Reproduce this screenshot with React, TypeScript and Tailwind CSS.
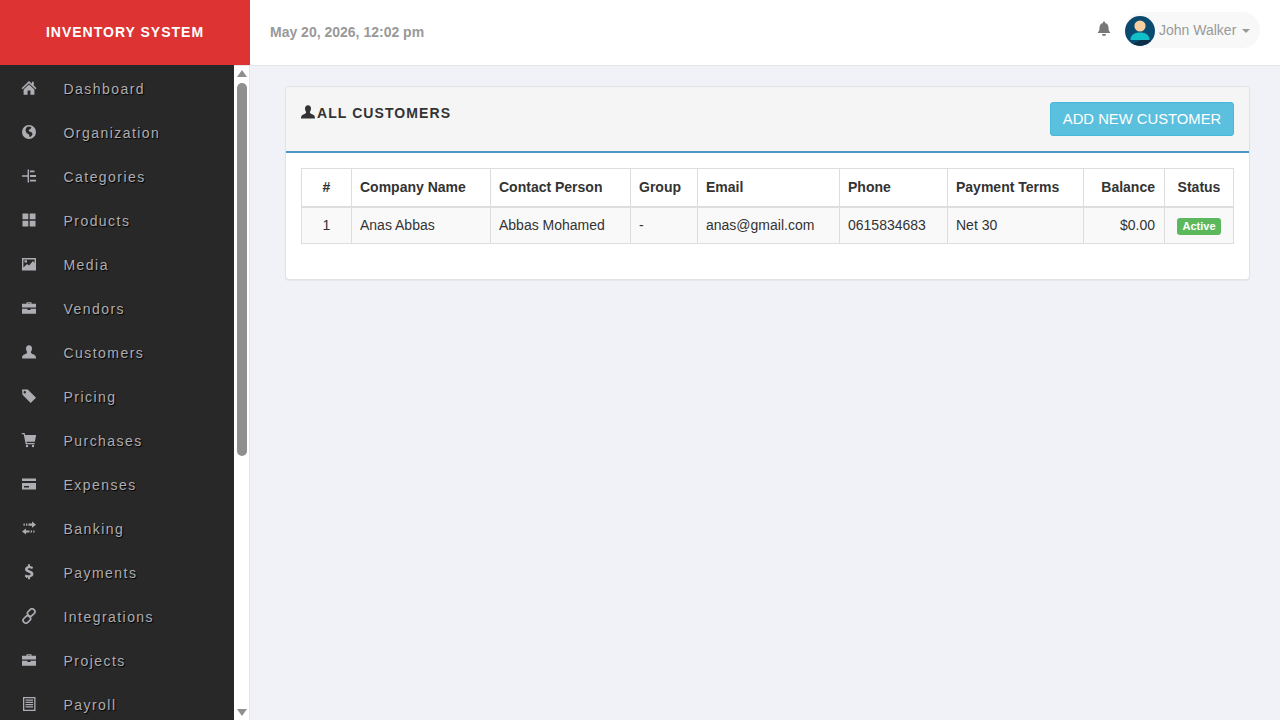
const I = ({ d, evenodd }: { d: string; evenodd?: boolean }) => (
  <svg viewBox="0 0 16 16" className="w-[16px] h-[16px]" fill="currentColor" fillRule={evenodd ? "evenodd" : "nonzero"}>
    <path d={d} />
  </svg>
);

const LinkIcon = () => (
  <svg viewBox="0 0 16 16" className="w-[16px] h-[16px]" fill="none" stroke="currentColor" strokeWidth="1.7">
    <rect x="6.2" y="1.7" width="8" height="5.6" rx="2.6" transform="rotate(-45 10.2 4.5)" />
    <rect x="1.8" y="8.7" width="8" height="5.6" rx="2.6" transform="rotate(-45 5.8 11.5)" />
  </svg>
);

const icons = {
  home: "M8 1L.5 8.2L1.6 9.2L8 3.2L14.4 9.2L15.5 8.2L12.8 5.6V1.8H10.9V3.8Z M8 4.4L2.6 9.5V14.8H6.6V10.4H9.4V14.8H13.4V9.5Z",
  globe: "M8 1a7 7 0 1 0 0 14A7 7 0 0 0 8 1Z M7 2.5L10.5 3L9.5 5L7.5 6L8.5 7.5L11 8.5L11.5 10.5L10 12.5L8.5 13L8 10.5L5.5 9L4.5 6.5L5 4Z",
  categories: "M6.6 1.5H8V14.5H6.6V8.7H1V7.3H6.6Z M9 2.5H13.5V4.2H9Z M9 7H15V9H9Z M9 11.8H15V13.5H9Z",
  grid: "M1.5 1.5H7.3V7.3H1.5Z M8.7 1.5H14.5V7.3H8.7Z M1.5 8.7H7.3V14.5H1.5Z M8.7 8.7H14.5V14.5H8.7Z",
  media: "M1 2H15V14.5H1Z M2.4 3.4V11.5L6 8L8 9.5L12 5L13.6 7V3.4Z M3.5 4.3H6V6.5H3.5Z",
  briefcase: "M5.5 3.7V2.2H10.5V3.7H15V7.5H1V3.7Z M6.8 3.7H9.2V3.2H6.8Z M1 8.7H6.5V10H9.5V8.7H15V13.7H1Z",
  user: "M8 1.3C10 1.3 11 2.8 11 4.6C11 6 10.4 7.2 9.9 8C9.9 9.2 10.5 9.7 12 10.3C14 11 15 11.8 15 14.6H1C1 11.8 2 11 4 10.3C5.5 9.7 6.1 9.2 6.1 8C5.6 7.2 5 6 5 4.6C5 2.8 6 1.3 8 1.3Z",
  tag: "M1 1.5H6.8L15 9.7L9.7 15L1.5 6.8Z M3.8 3A1.2 1.2 0 1 0 3.8 5.4A1.2 1.2 0 1 0 3.8 3Z",
  cart: "M.8 1H3.6L4.1 3H15.2L13.8 9.7H5.5L5.8 11H13.6V12.3H4.7L2.7 2.3H.8Z M6 12.8A1.2 1.2 0 1 0 6 15.2A1.2 1.2 0 1 0 6 12.8Z M12 12.8A1.2 1.2 0 1 0 12 15.2A1.2 1.2 0 1 0 12 12.8Z",
  card: "M1 2.5H15V5H1Z M1 7H15V13.5H1Z M3 10H8V11.5H3Z",
  transfer: "M11 1.5L15 4.7L11 7.8V5.8H7.5V3.6H11Z M6.3 3.6H5V5.8H6.3Z M3.8 3.6H2.5V5.8H3.8Z M5 8.5V10.4H8.5V12.6H5V14.5L1 11.4Z M9.7 10.4H11V12.6H9.7Z M12.2 10.4H13.5V12.6H12.2Z",
  dollar: "M7 .3H9V2C10.4 2.2 11.5 2.6 12.1 3L11.3 5.1C10.5 4.6 9.4 4.2 8.3 4.2C7.3 4.2 6.8 4.6 6.8 5.1C6.8 5.7 7.5 6 8.9 6.5C11 7.2 12.4 8.2 12.4 10.1C12.4 11.8 11.2 13 9 13.4V15.2H7V13.5C5.6 13.4 4.4 13 3.7 12.5L4.5 10.4C5.3 10.9 6.6 11.3 7.8 11.3C8.9 11.3 9.6 10.9 9.6 10.2C9.6 9.5 9 9.1 7.6 8.7C5.5 8 4 7.1 4 5.3C4 3.7 5.2 2.4 7 2Z",
  list: "M2 1H14.5V15H2Z M3.3 2.3V13.7H13.2V2.3Z M4.5 3.5H12V4.7H4.5Z M4.5 5.7H12V6.9H4.5Z M4.5 8H12V9.2H4.5Z M4.5 10.3H12V11.5H4.5Z",
};

const menu: [string, string | null, boolean?][] = [
  ["Dashboard", icons.home],
  ["Organization", icons.globe, true],
  ["Categories", icons.categories],
  ["Products", icons.grid],
  ["Media", icons.media, true],
  ["Vendors", icons.briefcase, true],
  ["Customers", icons.user],
  ["Pricing", icons.tag, true],
  ["Purchases", icons.cart],
  ["Expenses", icons.card, true],
  ["Banking", icons.transfer],
  ["Payments", icons.dollar],
  ["Integrations", null],
  ["Projects", icons.briefcase, true],
  ["Payroll", icons.list, true],
];

const cols = [
  { label: "#", w: "w-[50px]", align: "text-center" },
  { label: "Company Name", w: "w-[139px]", align: "text-left" },
  { label: "Contact Person", w: "w-[140px]", align: "text-left" },
  { label: "Group", w: "w-[67px]", align: "text-left" },
  { label: "Email", w: "w-[142px]", align: "text-left" },
  { label: "Phone", w: "w-[108px]", align: "text-left" },
  { label: "Payment Terms", w: "w-[136px]", align: "text-left" },
  { label: "Balance", w: "w-[81px]", align: "text-right" },
  { label: "Status", w: "w-[69px]", align: "text-center" },
];

const row = ["1", "Anas Abbas", "Abbas Mohamed", "-", "anas@gmail.com", "0615834683", "Net 30", "$0.00"];

export default function App() {
  return (
    <div className="h-screen overflow-hidden flex flex-col bg-[#f0f2f7] font-['Liberation_Sans',Arial,sans-serif]">
      <header className="h-[65px] flex shrink-0 bg-white">
        <div className="w-[250px] h-[65px] bg-[#dd3333] text-white text-[14px] font-bold tracking-[1px] flex items-center justify-center">
          INVENTORY SYSTEM
        </div>
        <div className="flex-1 flex items-center justify-between pl-[20px] pr-[20px]">
          <span className="text-[14px] font-bold text-[#999999]">May 20, 2026, 12:02 pm</span>
          <div className="flex items-center gap-[13px] -mt-[5px]">
            <span className="text-[#777777] -mt-[3px]">
              <svg viewBox="0 0 16 16" className="w-[16px] h-[16px] block" fill="currentColor">
                <path d="M8 .5C8.6.5 9 .9 9 1.5V2C11.2 2.5 12.5 4.2 12.5 6.5C12.5 9.5 13.2 10.5 14.5 12H1.5C2.8 10.5 3.5 9.5 3.5 6.5C3.5 4.2 4.8 2.5 7 2V1.5C7 .9 7.4.5 8 .5Z M6 13H10C10 14.2 9.1 15 8 15S6 14.2 6 13Z" />
              </svg>
            </span>
            <div className="h-[36px] w-[135px] rounded-full bg-[#f8f8f8] flex items-center">
              <svg viewBox="0 0 30 30" className="w-[30px] h-[30px] shrink-0 mt-[2px]">
                <circle cx="15" cy="15" r="15" fill="#0b4a6f" />
                <path d="M26 25A15 15 0 0 1 8 28L16 24H25Z" fill="#0c2f47" />
                <circle cx="15" cy="10" r="5.6" fill="#f6cfa3" />
                <path d="M5.5 24C5.5 19 9 16.5 15 16.5S24.5 19 24.5 24Z" fill="#12bfc9" />
              </svg>
              <span className="ml-[4px] mt-[1px] text-[14px] text-[#999999]">John Walker</span>
              <span className="ml-[6px] mt-[1px] w-0 h-0 border-x-[4px] border-x-transparent border-t-[4px] border-t-[#999999]" />
            </div>
          </div>
        </div>
      </header>
      <div className="flex-1 flex min-h-0">
        <aside className="w-[234px] bg-[#282828] overflow-hidden shrink-0 pt-[2px]">
          {menu.map(([name, d, evenodd]) => (
            <div key={name} className="h-[44px] flex items-center pl-[21px] text-[#adadb3]">
              <span className="w-[16px] h-[16px] -mt-[2px]">
                {d ? <I d={d} evenodd={evenodd} /> : <LinkIcon />}
              </span>
              <span className="ml-[26.5px] text-[14px] tracking-[1.45px] [text-shadow:1px_1px_1px_#000]">{name}</span>
            </div>
          ))}
        </aside>
        <div className="w-[16px] bg-white border-r border-t border-[#e3e5ea] shrink-0 flex flex-col items-center relative">
          <span className="mt-[4px] w-0 h-0 border-x-[5px] border-x-transparent border-b-[7px] border-b-[#8f8f8f]" />
          <div className="absolute top-[17px] left-[3px] w-[10px] h-[373px] rounded-[5px] bg-[#8f8f8f]" />
          <span className="mt-auto mb-[4px] w-0 h-0 border-x-[5px] border-x-transparent border-t-[7px] border-t-[#8f8f8f]" />
        </div>
        <main className="flex-1 pl-[35px] pr-[30px] pt-[20px] min-w-0 border-t border-[#e3e5ea]">
          <section className="bg-white rounded-[4px] border border-[#e0e2e6] shadow-[0_1px_1px_rgba(0,0,0,0.05)] h-[194px] w-[965px]">
            <div className="h-[66px] bg-[#f5f5f5] border-b-2 border-[#4a98c4] rounded-t-[4px] flex justify-between pl-[15px] pr-[15px]">
              <h2 className="flex h-[16px] mt-[18px] items-center text-[#333333] text-[14px] font-bold tracking-[1.08px]">
                <span className="w-[16px] h-[16px] -mt-[2px] -ml-px mr-px text-[#333333]">
                  <I d={icons.user} />
                </span>
                ALL CUSTOMERS
              </h2>
              <button className="mt-[15px] h-[34px] w-[184px] rounded-[3px] bg-[#5bc0de] border border-[#46b8da] text-white text-[14.8px]">
                ADD NEW CUSTOMER
              </button>
            </div>
            <div className="px-[15px] pt-[15px]">
              <table className="border-collapse table-fixed w-[932px] text-[14px] text-[#333333]">
                <thead>
                  <tr className="h-[38px] bg-white">
                    {cols.map((c) => (
                      <th key={c.label} className={`${c.w} ${c.align} pl-[8px] ${c.label === "Balance" ? "pr-[9px]" : "pr-[8px]"} font-bold border border-[#dddddd] border-b-2`}>
                        {c.label}
                      </th>
                    ))}
                  </tr>
                </thead>
                <tbody>
                  <tr className="h-[37px] bg-[#f9f9f9]">
                    {row.map((v, i) => (
                      <td key={i} className={`${cols[i].align} pl-[8px] ${i === 7 ? "pr-[9px]" : "pr-[8px]"} border border-[#dddddd]`}>
                        {v}
                      </td>
                    ))}
                    <td className="text-center border border-[#dddddd]">
                      <span className="inline-block align-middle w-[44px] h-[17px] leading-[17px] rounded-[3px] bg-[#5cb85c] text-white text-[11px] font-bold">
                        Active
                      </span>
                    </td>
                  </tr>
                </tbody>
              </table>
            </div>
          </section>
        </main>
      </div>
    </div>
  );
}
